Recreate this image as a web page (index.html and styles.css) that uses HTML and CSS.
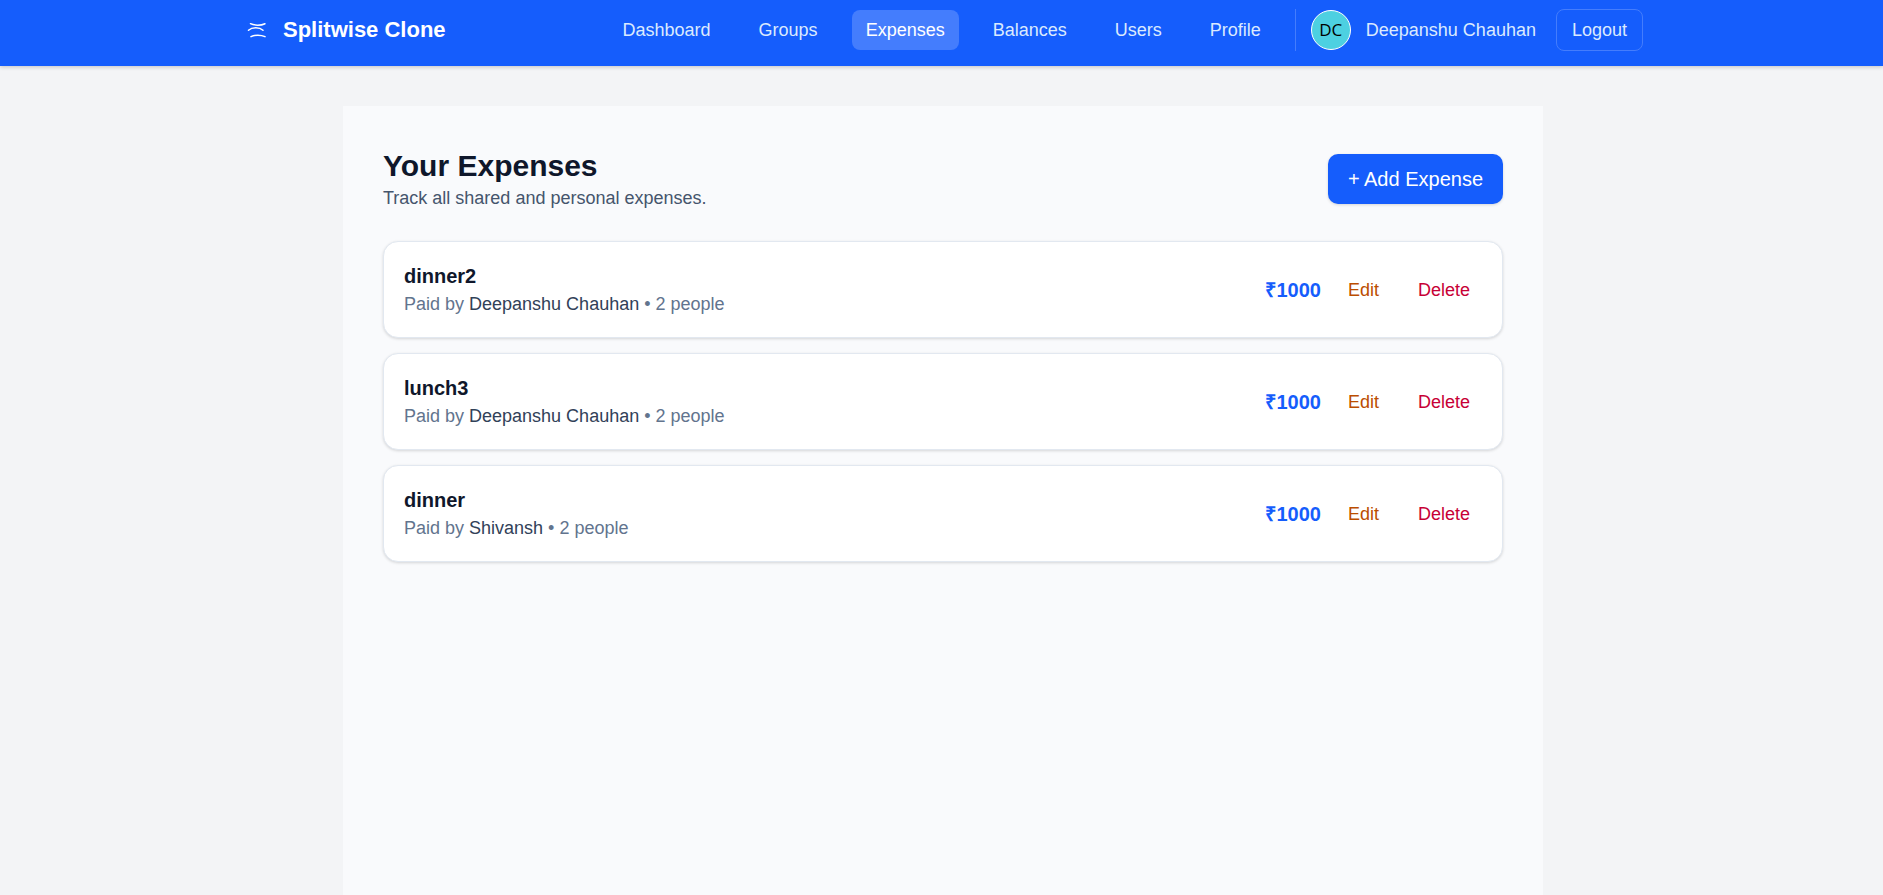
FILE: index.html
```html
<!DOCTYPE html>
<html lang="en">
<head>
<meta charset="utf-8">
<meta name="viewport" content="width=device-width, initial-scale=1">
<title>Splitwise Clone</title>
<link rel="stylesheet" href="styles.css">
</head>
<body>
<header class="topbar">
  <div class="topbar-inner">
    <a class="brand" href="#">
      <svg class="brand-icon" viewBox="0 0 30 30" fill="none" stroke="currentColor" stroke-width="1.5" stroke-linecap="round" aria-hidden="true">
        <path d="M7.5 8.7C11 10.6 18 10.6 22 8.7"/>
        <path d="M5.5 15.2C9 12 16.5 12 20 15.2"/>
        <path d="M8 21.7C11.5 19.7 18 19.7 22 21.7"/>
      </svg>
      <span>Splitwise Clone</span>
    </a>
    <div class="topbar-right">
      <nav class="nav" aria-label="Main">
        <a class="nav-link" href="#">Dashboard</a>
        <a class="nav-link" href="#">Groups</a>
        <a class="nav-link nav-link-active" href="#" aria-current="page">Expenses</a>
        <a class="nav-link" href="#">Balances</a>
        <a class="nav-link" href="#">Users</a>
        <a class="nav-link" href="#">Profile</a>
      </nav>
      <div class="account">
        <span class="avatar">DC</span>
        <span class="account-name">Deepanshu Chauhan</span>
        <button class="logout" type="button">Logout</button>
      </div>
    </div>
  </div>
</header>
<main class="page">
  <section class="panel">
    <div class="panel-head">
      <div>
        <h1 class="title">Your Expenses</h1>
        <p class="subtitle">Track all shared and personal expenses.</p>
      </div>
      <button class="add" type="button">+ Add Expense</button>
    </div>
    <ul class="expenses">
      <li class="expense">
        <div>
          <h2 class="expense-name">dinner2</h2>
          <p class="expense-meta">Paid by <span class="payer">Deepanshu Chauhan</span> • 2 people</p>
        </div>
        <div class="expense-side">
          <span class="amount">₹1000</span>
          <button class="action action-edit" type="button">Edit</button>
          <button class="action action-delete" type="button">Delete</button>
        </div>
      </li>
      <li class="expense">
        <div>
          <h2 class="expense-name">lunch3</h2>
          <p class="expense-meta">Paid by <span class="payer">Deepanshu Chauhan</span> • 2 people</p>
        </div>
        <div class="expense-side">
          <span class="amount">₹1000</span>
          <button class="action action-edit" type="button">Edit</button>
          <button class="action action-delete" type="button">Delete</button>
        </div>
      </li>
      <li class="expense">
        <div>
          <h2 class="expense-name">dinner</h2>
          <p class="expense-meta">Paid by <span class="payer">Shivansh</span> • 2 people</p>
        </div>
        <div class="expense-side">
          <span class="amount">₹1000</span>
          <button class="action action-edit" type="button">Edit</button>
          <button class="action action-delete" type="button">Delete</button>
        </div>
      </li>
    </ul>
  </section>
</main>
</body>
</html>
```

FILE: styles.css
```css
* {
  box-sizing: border-box;
}

body {
  display: flex;
  flex-direction: column;
  min-height: 100vh;
  margin: 0;
  background: #f3f4f6;
  color: #0f172b;
  font-family: "Liberation Sans", Arial, sans-serif;
  font-size: 18px;
  line-height: 26px;
}

h1, h2, p, ul {
  margin: 0;
  padding: 0;
}

a {
  color: inherit;
  text-decoration: none;
}

button {
  font: inherit;
  cursor: pointer;
}

.topbar {
  padding: 9px 0 15px 3px;
  background: #155dfc;
  color: #dbeafe;
  box-shadow: 0 1px 4px rgba(0, 0, 0, 0.2);
}

.topbar-inner {
  display: flex;
  align-items: center;
  justify-content: space-between;
  max-width: 1400px;
  margin: 0 auto;
}

.brand {
  display: flex;
  align-items: center;
  gap: 10px;
  color: #fff;
  font-size: 22px;
  font-weight: 700;
}

.brand-icon {
  width: 30px;
  height: 30px;
}

.topbar-right,
.nav {
  display: flex;
  align-items: center;
  gap: 20px;
}

.nav-link {
  padding: 7px 14px;
  border-radius: 8px;
}

.nav-link-active {
  background: #447dfd;
  color: #fff;
}

.account {
  display: flex;
  align-items: center;
  gap: 15px;
  padding-left: 15px;
  border-left: 1px solid #447dfd;
}

.avatar {
  display: flex;
  align-items: center;
  justify-content: center;
  width: 40px;
  height: 40px;
  border: 1px solid #fff;
  border-radius: 50%;
  background: #4dd0e1;
  color: #000;
  font-family: "Open Sans", "Noto Sans", sans-serif;
  font-size: 17px;
}

.logout {
  margin-left: 5px;
  padding: 7px 15px;
  border: 1px solid #447dfd;
  border-radius: 8px;
  background: transparent;
  color: inherit;
}

.page {
  display: flex;
  flex: 1;
  padding: 40px 0 0 3px;
}

.panel {
  width: 100%;
  max-width: 1200px;
  margin: 0 auto;
  padding: 40px;
  background: #f9fafc;
}

.panel-head {
  display: flex;
  align-items: center;
  justify-content: space-between;
  margin-bottom: 30px;
}

.title {
  font-size: 30px;
  line-height: 39px;
}

.subtitle {
  color: #45556c;
}

.add {
  padding: 12px 20px;
  border: 0;
  border-radius: 10px;
  background: #155dfc;
  color: #fff;
  font-size: 20px;
  box-shadow: 0 1px 3px rgba(0, 0, 0, 0.15);
}

.expenses {
  display: grid;
  gap: 15px;
  list-style: none;
}

.expense {
  display: flex;
  align-items: center;
  justify-content: space-between;
  padding: 20px;
  border: 1px solid #e2e8f0;
  border-radius: 15px;
  background: #fff;
  box-shadow: 0 1px 3px rgba(0, 0, 0, 0.15);
}

.expense-name {
  font-size: 20px;
  line-height: 29px;
}

.expense-meta {
  color: #62748e;
}

.payer {
  color: #314158;
}

.expense-side {
  display: flex;
  align-items: center;
  gap: 15px;
}

.amount {
  color: #155dfc;
  font-size: 20px;
  font-weight: 700;
}

.action {
  padding: 6px 12px;
  border: 0;
  background: transparent;
}

.action-edit {
  color: #bb4d00;
}

.action-delete {
  color: #c70036;
}
```
